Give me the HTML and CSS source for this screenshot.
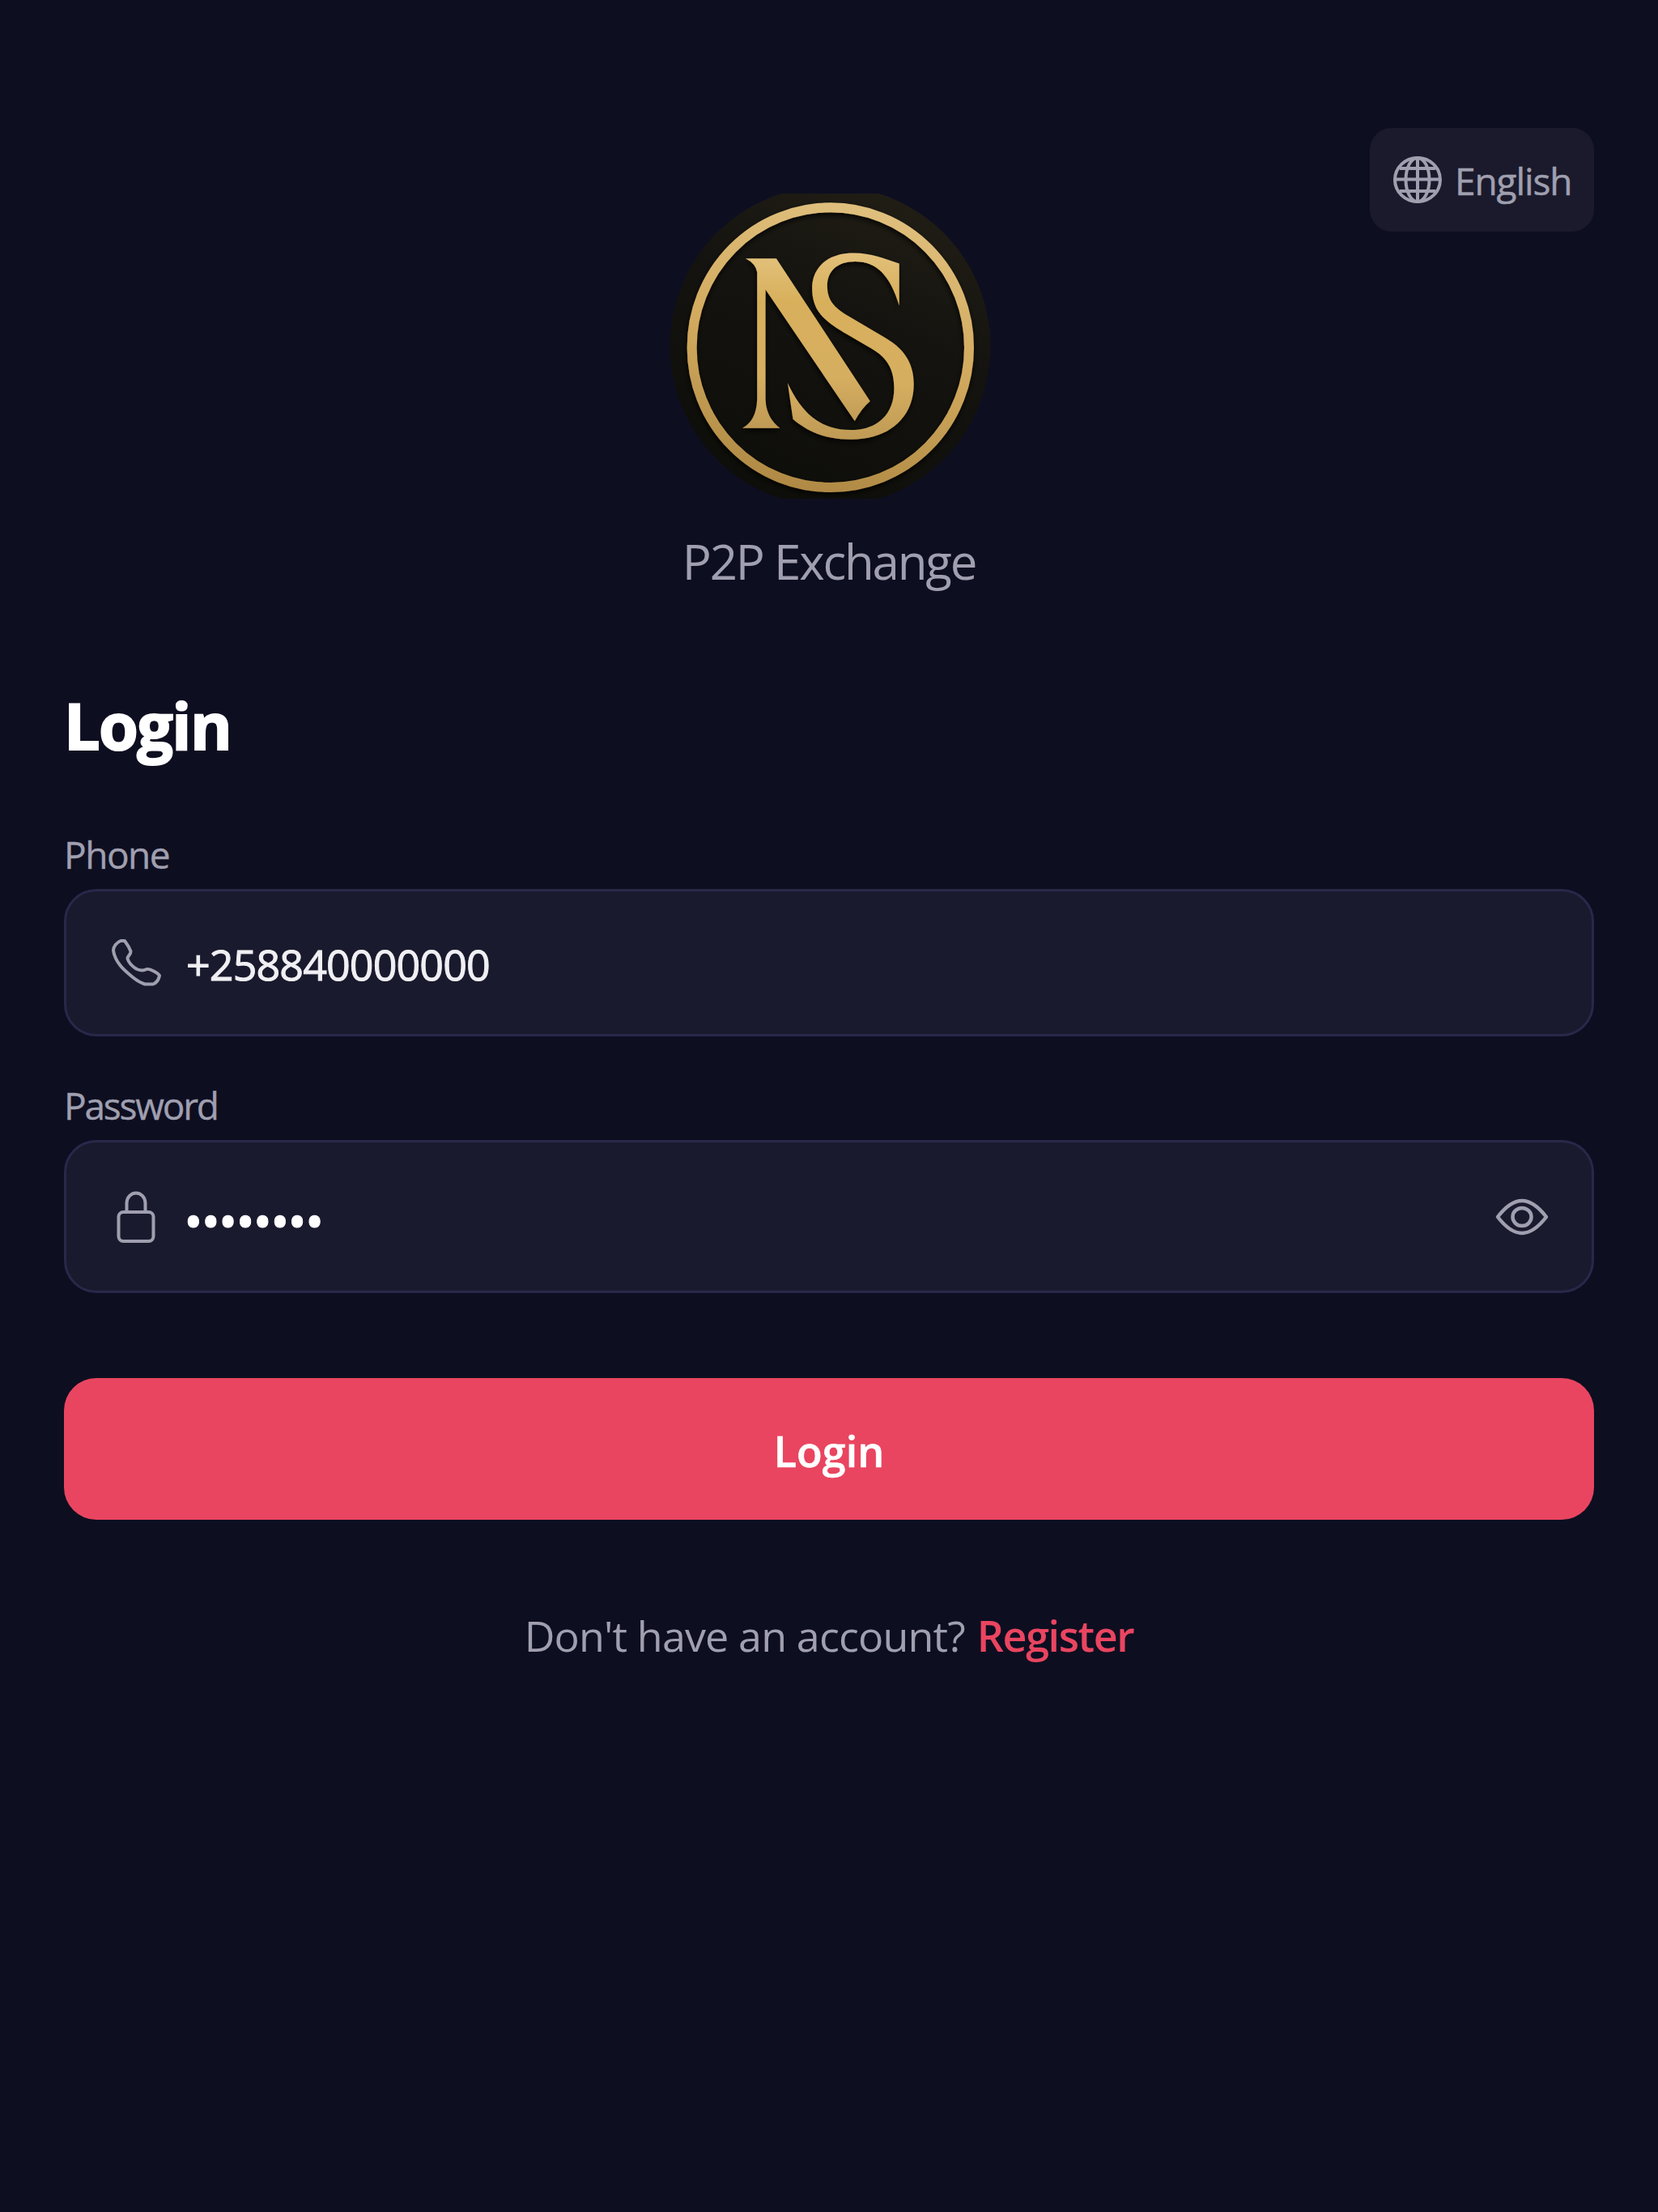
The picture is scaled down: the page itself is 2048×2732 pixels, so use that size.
FILE: index.html
```html
<!DOCTYPE html>
<html lang="en">
<head>
<meta charset="utf-8">
<title>Login</title>
<link rel="stylesheet" href="styles.css">
</head>
<body>
<main class="screen">
  <header class="topbar">
    <button class="language" type="button">
      <svg class="globe" viewBox="0 0 60 58" fill="none" stroke="currentColor" stroke-width="4">
        <ellipse cx="30" cy="29" rx="28" ry="27"/>
        <ellipse cx="30" cy="29" rx="14.500" ry="27"/>
        <path d="M30 2v54M2 28.500h56M8 15h44M8 43h44"/>
      </svg>
      <span class="language-name">English</span>
    </button>
  </header>
  <div class="brand">
    <svg class="logo" viewBox="82 58 1192 1132">
      <defs>
        <linearGradient id="gold" x1="0" y1="0" x2="0" y2="1">
          <stop offset="0" stop-color="#e2c07a"/><stop offset=".25" stop-color="#d8b05c"/><stop offset=".7" stop-color="#d6ae60"/><stop offset="1" stop-color="#bf9a55"/>
        </linearGradient>
        <linearGradient id="ring" x1=".6" y1="0" x2=".4" y2="1">
          <stop offset="0" stop-color="#dfbf7c"/><stop offset=".5" stop-color="#d2aa5e"/><stop offset="1" stop-color="#b08a45"/>
        </linearGradient>
        <linearGradient id="disc" x1=".7" y1="0" x2=".3" y2="1">
          <stop offset="0" stop-color="#211e15"/><stop offset=".4" stop-color="#14130f"/><stop offset="1" stop-color="#0d0d09"/>
        </linearGradient>
        <filter id="shade" x="-10%" y="-10%" width="120%" height="120%">
          <feDropShadow dx="-2" dy="10" stdDeviation="9" flood-color="#000" flood-opacity=".8"/>
        </filter>
      </defs>
      <circle cx="678" cy="624" r="594" fill="url(#disc)"/>
      <g filter="url(#shade)">
        <ellipse cx="679" cy="629" rx="514" ry="519" fill="none" stroke="url(#ring)" stroke-width="36"/>
        <path fill="url(#gold)" d="M364 299H478L826 828Q794 855 769 902L438 414V820Q440 890 492 928H352Q405 900 407 820V350Q402 318 364 299Z"/>
        <path fill="url(#gold)" d="M934 474V318C880 300 830 279 765 279C670 279 611 330 611 410C611 500 665 535 740 580L830 632C890 666 915 710 915 780C915 880 850 935 755 935C640 935 570 870 520 760L540 895C600 945 665 970 755 970C900 970 988 885 988 765C988 680 945 630 880 592L745 512C690 480 667 450 667 400C667 345 705 310 770 310C850 310 900 360 934 474Z"/>
      </g>
    </svg>
    <p class="tagline">P2P Exchange</p>
  </div>
  <form class="form">
    <h1 class="title">Login</h1>
    <label class="label label-phone">Phone</label>
    <div class="field field-phone">
      <svg class="icon" viewBox="0 0 64 64" fill="none" stroke="currentColor" stroke-width="4" stroke-linejoin="round">
        <path d="M13 5C8 7 4 12 4 17C5 24 8 30 13 36C17 41 22 45 28 50C33 54 38 57 43 58.500H53C57 57 60 53 61 48C60 46 57 44 53 42C49 40 46 39 44 40.500C41 42 37 41.500 33 40C28 37 23 32 21.500 27C21 24 26 22 25.500 18C24 14 21 9 18 5Z"/>
      </svg>
      <span class="value">+258840000000</span>
    </div>
    <label class="label label-password">Password</label>
    <div class="field field-password">
      <svg class="icon" viewBox="0 0 64 64" fill="none" stroke="currentColor" stroke-width="4">
        <rect x="10.500" y="26" width="43" height="36" rx="6"/>
        <path d="M20.500 26V15a11.500 12.500 0 0 1 23 0V26"/>
      </svg>
      <span class="value dots">••••••••</span>
      <svg class="eye" viewBox="0 0 66 46" fill="none" stroke="currentColor" stroke-width="4.500" stroke-linejoin="round">
        <path d="M3 23C13 10 23 3 33 3S53 10 63 23C53 36 43 43 33 43S13 36 3 23Z"/>
        <ellipse cx="33" cy="23" rx="11.500" ry="11"/>
      </svg>
    </div>
    <button class="submit" type="button"><span class="submit-text">Login</span></button>
  </form>
  <p class="signup"><span class="question">Don't have an account?</span><a class="register">Register</a></p>
</main>
</body>
</html>
```
FILE: styles.css
```css
* { box-sizing: border-box; margin: 0; padding: 0; }
body { background: #0e0e21; font-family: "Open Sans", "Noto Sans", sans-serif; color: #9f9faf; }
button { border: 0; font: inherit; color: inherit; }
.screen { min-height: 2732px; padding: 158px 79px 0; display: flex; flex-direction: column; }
.topbar { display: flex; justify-content: flex-end; height: 81px; }
.language { width: 277px; height: 128px; border-radius: 27px; background: #1a1a2c; display: flex; align-items: center; padding: 0 0 0 29px; gap: 16px; }
.globe { width: 60px; height: 58px; margin-top: -1px; }
.language-name { font-size: 46px; line-height: 64px; letter-spacing: -1.1px; margin-top: 2px; -webkit-text-stroke: 0.5px currentColor; }
.brand { display: flex; flex-direction: column; align-items: center; }
.logo { width: 397px; height: 377px; margin-left: 2px; }
.tagline { font-size: 60px; line-height: 80px; margin-top: 37px; letter-spacing: -2.2px; }
.form { display: flex; flex-direction: column; margin-top: 113px; }
.title { font-size: 79px; line-height: 100px; font-weight: 700; letter-spacing: -1.6px; color: #fff; -webkit-text-stroke: 2px #fff; }
.label { font-size: 46px; line-height: 60px; -webkit-text-stroke: 0.4px currentColor; }
.label-phone { margin-top: 79px; letter-spacing: -1.5px; }
.label-password { margin-top: 55px; letter-spacing: -2.2px; }
.field { display: flex; align-items: center; border: 3px solid #28284a; border-radius: 40px; background: #1a1a2e; padding: 0 53px 0 54px; gap: 30px; }
.field-phone { height: 182px; margin-top: 13px; }
.field-password { height: 189px; margin-top: 13px; }
.icon { width: 64px; height: 64px; flex: none; }
.value { color: #f0f0f4; font-size: 52px; line-height: 70px; flex: 1; letter-spacing: -0.9px; padding-top: 4px; -webkit-text-stroke: 1px currentColor; }
.dots { font-size: 63px; letter-spacing: -2.3px; color: #fff; padding-top: 8px; margin-left: -3px; }
.eye { width: 66px; height: 46px; }
.submit { height: 175px; margin-top: 105px; border-radius: 40px; background: #e94560; color: #fff; }
.submit-text { display: block; font-size: 52px; line-height: 70px; font-weight: 600; padding-top: 4px; -webkit-text-stroke: 0.6px currentColor; }
.signup { display: flex; justify-content: center; gap: 15px; margin-top: 108px; font-size: 52px; line-height: 70px; }
.question { letter-spacing: -0.85px; }
.register { color: #e94560; font-weight: 600; letter-spacing: -1.4px; }
```
